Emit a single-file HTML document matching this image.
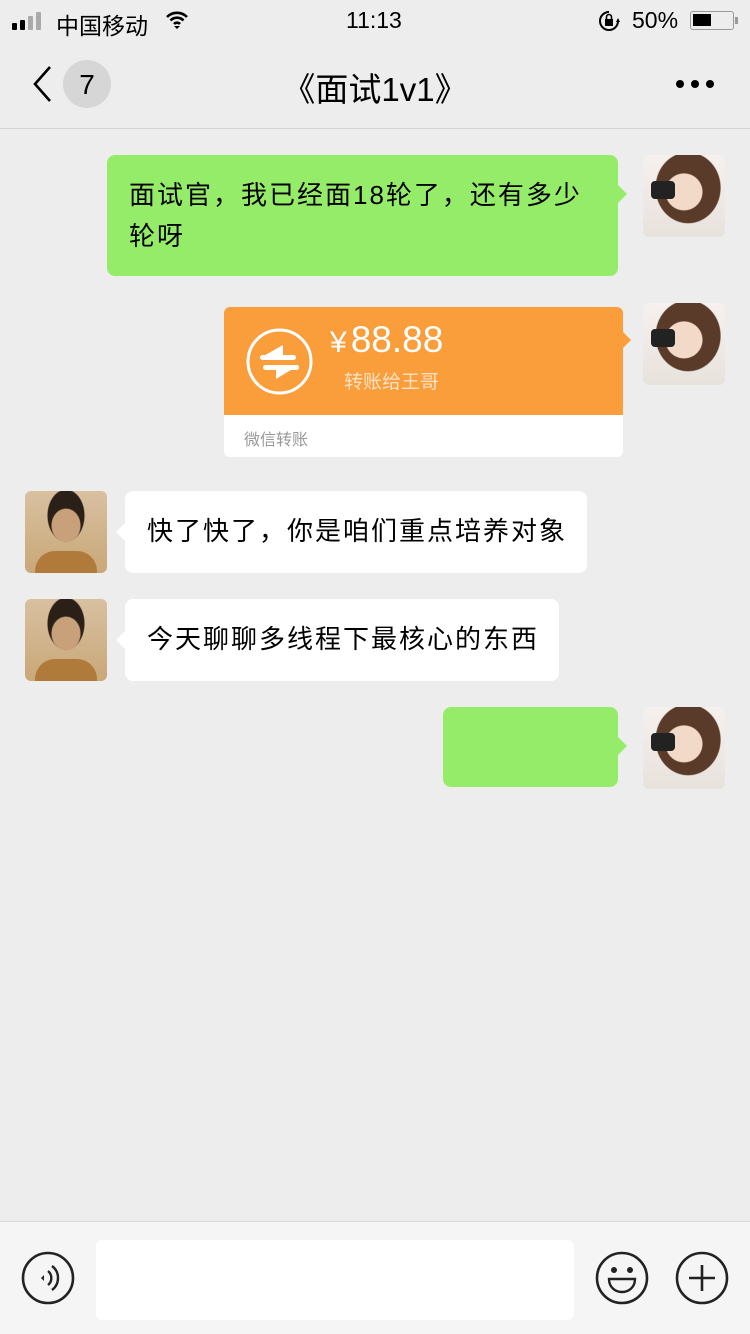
<!DOCTYPE html>
<html><head><meta charset="utf-8"><style>
*{margin:0;padding:0;box-sizing:border-box}
body{width:750px;height:1334px;background:#ededed;font-family:"Liberation Sans","Noto Sans CJK SC",sans-serif;position:relative;overflow:hidden;color:#000}
.a{position:absolute}
.bub{position:absolute;border-radius:8px;font-size:26px;line-height:41px;padding:20px 22px;white-space:nowrap;letter-spacing:2px}
.g{background:#95ec69}
.w{background:#fff}
.tr:after{content:"";position:absolute;right:-9px;top:30px;border:9px solid transparent;border-right:0;border-left-color:#95ec69}
.tl:before{content:"";position:absolute;left:-9px;top:32px;border:9px solid transparent;border-left:0;border-right-color:#fff}
.av{position:absolute;width:82px;height:82px;border-radius:6px;overflow:hidden}
.f{background:radial-gradient(circle at 50% 45%,#f3d9c8 0 18px,transparent 19px),radial-gradient(ellipse at 55% 40%,#5a3b2a 0 32px,transparent 33px),linear-gradient(#f6f1ee,#e8e2dd)}
.f:after{content:"";position:absolute;left:8px;top:26px;width:24px;height:18px;background:#222;border-radius:4px}
.m{background:radial-gradient(ellipse at 50% 42%,#c8a07a 0 14px,transparent 15px),radial-gradient(ellipse at 50% 30%,#2b2018 0 18px,transparent 19px),linear-gradient(#d8c0a0,#c9a878)}
.m:after{content:"";position:absolute;left:10px;bottom:0;width:62px;height:22px;background:#b07a3a;border-radius:20px 20px 0 0}
</style></head><body>
<div class="a" style="left:12px;top:12px;display:flex;align-items:flex-end;gap:3px;height:18px">
<div style="width:5px;height:7px;background:#000;border-radius:1px"></div><div style="width:5px;height:10px;background:#000;border-radius:1px"></div><div style="width:5px;height:14px;background:#aaa;border-radius:1px"></div><div style="width:5px;height:18px;background:#aaa;border-radius:1px"></div></div>
<div class="a" style="left:56px;top:7px;font-size:23px">中国移动</div>
<svg class="a" style="left:165px;top:10px" width="24" height="20" viewBox="0 0 24 20"><path d="M2 7a14 14 0 0 1 20 0M5.5 10.5a9 9 0 0 1 13 0M9 14a4 4 0 0 1 6 0" stroke="#000" stroke-width="2.6" fill="none"/><path d="M12 19l-3-3h6z"/></svg>
<div class="a" style="left:346px;top:7px;font-size:23px">11:13</div>
<svg class="a" style="left:597px;top:9px" width="24" height="24" viewBox="0 0 24 24"><path d="M12 3a9 9 0 1 0 9 9" stroke="#000" stroke-width="2" fill="none"/><path d="M21 9l-2 4 4 0z"/><rect x="8" y="10" width="8" height="7"/><path d="M9.5 10V8a2.5 2.5 0 0 1 5 0v2" stroke="#000" stroke-width="1.6" fill="none"/></svg>
<div class="a" style="left:632px;top:7px;font-size:23px">50%</div>
<div class="a" style="left:690px;top:11px;width:44px;height:19px;border:1.5px solid #999;border-radius:3px;padding:2px"><div style="width:18px;height:12px;background:#000"></div></div>
<div class="a" style="left:735px;top:17px;width:3px;height:7px;background:#999"></div>
<svg class="a" style="left:30px;top:64px" width="24" height="40" viewBox="0 0 24 40"><path d="M20 3L5 20l15 17" stroke="#000" stroke-width="2.6" fill="none"/></svg>
<div class="a" style="left:63px;top:60px;width:48px;height:48px;border-radius:50%;background:#d6d6d6;font-size:28px;text-align:center;line-height:50px">7</div>
<div class="a" style="left:0;width:750px;top:63px;text-align:center;font-size:33px">《面试1v1》</div>
<div class="a" style="left:676px;top:80px;display:flex;gap:7px"><i style="width:8px;height:8px;background:#000;border-radius:50%"></i><i style="width:8px;height:8px;background:#000;border-radius:50%"></i><i style="width:8px;height:8px;background:#000;border-radius:50%"></i></div>
<div class="a" style="left:0;top:128px;width:750px;height:1px;background:#d4d4d4"></div>
<div class="bub g tr" style="left:107px;top:155px;width:511px;height:121px">面试官，我已经面18轮了，还有多少<br>轮呀</div>
<div class="av f" style="left:643px;top:155px"></div>
<div class="a" style="left:224px;top:307px;width:399px;height:150px;border-radius:6px;overflow:hidden;background:#fff">
<div style="height:108px;background:#fa9d3b;position:relative">
<svg class="a" style="left:22px;top:21px" width="67" height="67" viewBox="0 0 67 67"><circle cx="33.5" cy="33.5" r="31.5" stroke="#fff" stroke-width="3" fill="none"/><polygon points="14,30 37,17 37,30" fill="#fff"/><rect x="14" y="27" width="36" height="5" rx="2.5" fill="#fff"/><rect x="17" y="37" width="36" height="5" rx="2.5" fill="#fff"/><polygon points="30,37 53,37 30,51" fill="#fff"/></svg>
<div class="a" style="left:106px;top:12px;color:#fff;font-size:37px"><span style="font-size:30px;margin-right:4px">¥</span>88.88</div>
<div class="a" style="left:120px;top:60px;color:#fde2c4;font-size:19px">转账给王哥</div>
</div>
<div style="padding:11px 20px;color:#999;font-size:16px">微信转账</div>
</div>
<div class="a" style="left:623px;top:332px;border:8px solid transparent;border-right:0;border-left-color:#fa9d3b"></div>
<div class="av f" style="left:643px;top:303px"></div>
<div class="av m" style="left:25px;top:491px"></div>
<div class="bub w tl" style="left:125px;top:491px;width:462px;height:82px">快了快了，你是咱们重点培养对象</div>
<div class="av m" style="left:25px;top:599px"></div>
<div class="bub w tl" style="left:125px;top:599px;width:434px;height:82px">今天聊聊多线程下最核心的东西</div>
<div class="bub g tr" style="left:443px;top:707px;width:175px;height:80px"></div>
<div class="av f" style="left:643px;top:707px"></div>
<div class="a" style="left:0;top:1221px;width:750px;height:113px;background:#f5f5f5;border-top:1px solid #d8d8d8"></div>
<div class="a" style="left:96px;top:1240px;width:478px;height:80px;background:#fff;border-radius:6px"></div>
<svg class="a" style="left:20px;top:1250px" width="56" height="56" viewBox="0 0 56 56"><circle cx="28" cy="28" r="25" stroke="#222" stroke-width="2.6" fill="none"/><path d="M24 25l-3 3 3 3z" fill="#222"/><path d="M28 21a9 9 0 0 1 0 14M32 16a15 15 0 0 1 0 24" stroke="#222" stroke-width="2.4" fill="none"/></svg>
<svg class="a" style="left:594px;top:1250px" width="56" height="56" viewBox="0 0 56 56"><circle cx="28" cy="28" r="25" stroke="#222" stroke-width="2.6" fill="none"/><circle cx="20" cy="20" r="3" fill="#222"/><circle cx="36" cy="20" r="3" fill="#222"/><path d="M15 29h26c0 8-6 13-13 13s-13-5-13-13z" stroke="#222" stroke-width="2.4" fill="none"/></svg>
<svg class="a" style="left:674px;top:1250px" width="56" height="56" viewBox="0 0 56 56"><circle cx="28" cy="28" r="25" stroke="#222" stroke-width="2.6" fill="none"/><path d="M28 15v26M15 28h26" stroke="#222" stroke-width="2.6"/></svg>
</body></html>
